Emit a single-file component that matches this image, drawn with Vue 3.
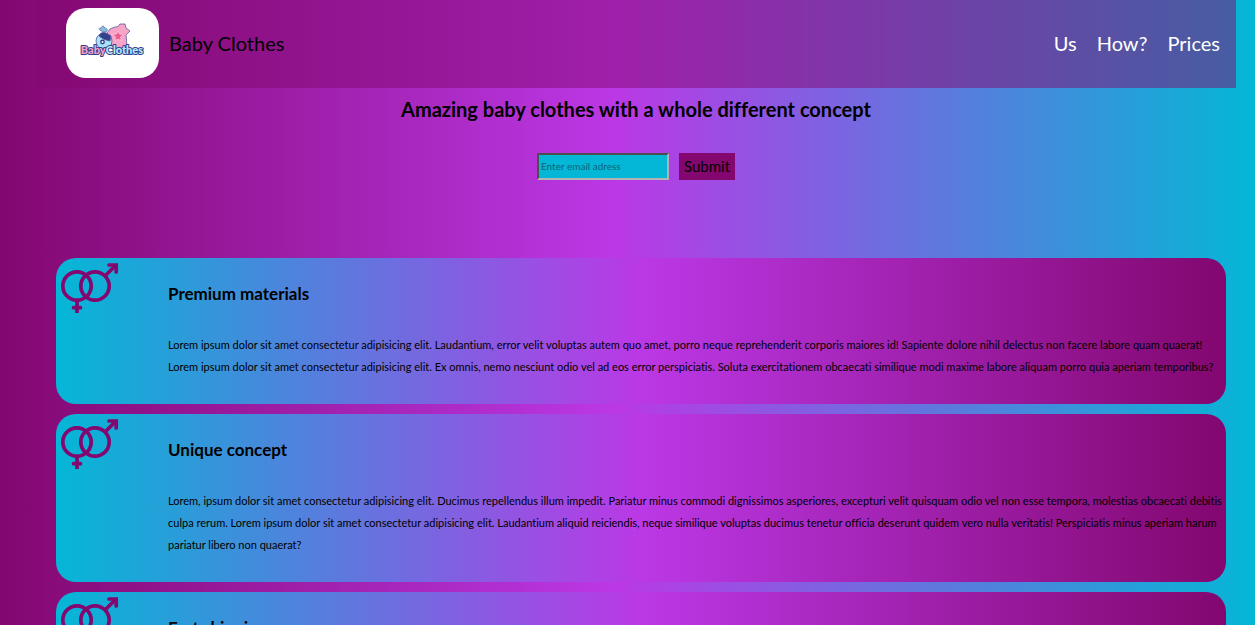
<script setup>
import { ref } from 'vue'

const email = ref('')

const links = [
  { label: 'Us', href: '#us' },
  { label: 'How?', href: '#how' },
  { label: 'Prices', href: '#prices' },
]

const features = [
  {
    title: 'Premium materials',
    text: 'Lorem ipsum dolor sit amet consectetur adipisicing elit. Laudantium, error velit voluptas autem quo amet, porro neque reprehenderit corporis maiores id! Sapiente dolore nihil delectus non facere labore quam quaerat! Lorem ipsum dolor sit amet consectetur adipisicing elit. Ex omnis, nemo nesciunt odio vel ad eos error perspiciatis. Soluta exercitationem obcaecati similique modi maxime labore aliquam porro quia aperiam temporibus?',
  },
  {
    title: 'Unique concept',
    text: 'Lorem, ipsum dolor sit amet consectetur adipisicing elit. Ducimus repellendus illum impedit. Pariatur minus commodi dignissimos asperiores, excepturi velit quisquam odio vel non esse tempora, molestias obcaecati debitis culpa rerum. Lorem ipsum dolor sit amet consectetur adipisicing elit. Laudantium aliquid reiciendis, neque similique voluptas ducimus tenetur officia deserunt quidem vero nulla veritatis! Perspiciatis minus aperiam harum pariatur libero non quaerat?',
  },
  {
    title: 'Fast shipping',
    text: 'Lorem ipsum dolor sit amet consectetur adipisicing elit.',
  },
]
</script>

<template>
  <div class="page">
    <header class="header">
      <div class="brand">
        <svg class="logo" viewBox="0 0 93 70" role="img" aria-label="Baby Clothes logo">
          <g stroke="#55599c" stroke-width="0.8">
            <path d="M44 21 L49 19 Q52 20 54 16 L59 16 L60 20 L64 23 L60 27 L61 38 Q54 43 46 41 L45 30 L41 25 Z" fill="#f8a3c8" />
            <circle cx="38" cy="33" r="8" fill="#a5e3f7" />
            <path d="M33 28 Q35 23 40 25 L45 28 L44 33 Q37 32 33 28 Z" fill="#33418d" />
            <path d="M35 23 Q31 20 35 20 Q37 16 39 20 Q43 21 40 24 Z" fill="#83bde0" stroke-width="0.6" />
          </g>
          <path d="M52 23 L53.5 26 L57 26.5 L54.5 29 L55 32.5 L52 31 L48.8 32.5 L49.5 29 L47 26.5 L50.5 26 Z" fill="#ee5d91" stroke="#ffd7e8" stroke-width="0.6" />
          <circle cx="36.5" cy="34" r="2.4" fill="#33418d" />
          <circle cx="36.5" cy="34" r="1" fill="#fff" />
          <text x="46" y="46" text-anchor="middle" class="logo-text"><tspan fill="#f7a1cb">Baby</tspan><tspan fill="#b8ecfb">Clothes</tspan></text>
        </svg>
        <span>Baby Clothes</span>
      </div>
      <nav class="nav">
        <a v-for="link in links" :key="link.href" :href="link.href">{{ link.label }}</a>
      </nav>
    </header>

    <main>
      <section class="intro">
        <h1>Amazing baby clothes with a whole different concept</h1>
        <form class="signup" @submit.prevent>
          <input v-model="email" type="email" aria-label="Email address" placeholder="Enter email adress" />
          <button type="submit">Submit</button>
        </form>
      </section>

      <section class="features">
        <article v-for="feature in features" :key="feature.title" class="card">
          <svg class="icon" viewBox="0 0 62 50" aria-hidden="true">
            <g fill="none" stroke="#83076f" stroke-width="3.7">
              <circle cx="16" cy="23" r="14.2" />
              <circle cx="34" cy="23" r="14.2" />
              <path d="M16 37 V50 M44 13 L55 2" />
              <path d="M12.5 44.7 H19.5 M48 2 H55.2 V9" stroke-linecap="round" />
            </g>
          </svg>
          <div class="copy">
            <h2>{{ feature.title }}</h2>
            <p>{{ feature.text }}</p>
          </div>
        </article>
      </section>
    </main>
  </div>
</template>

<style>
body {
  margin: 0;
}
</style>

<style scoped>
.page {
  box-sizing: border-box;
  min-height: 100vh;
  padding: 0 19px 10px 36px;
  background: linear-gradient(to right, #83076f, #bb38e6 49%, #04b7d6);
  color: #000;
  font-family: Lato, sans-serif;
  font-variant-ligatures: none;
}

.header {
  display: flex;
  align-items: center;
  justify-content: space-between;
  padding: 8px 16px 10px 30px;
  background: rgba(131, 7, 111, 0.5);
  font-size: 20px;
}

.brand {
  display: flex;
  align-items: center;
  gap: 10px;
}

.logo {
  width: 93px;
  height: 70px;
  border-radius: 20px;
  background: #fff;
}

.logo-text {
  font: 900 11px Lato, sans-serif;
  stroke: #33418d;
  stroke-width: 2px;
  stroke-linejoin: round;
  paint-order: stroke;
}

.nav {
  display: flex;
  gap: 20px;
}

.nav a {
  color: #fff;
  text-decoration: none;
}

.intro {
  display: flex;
  flex-direction: column;
  align-items: center;
  padding: 9px 0 78px;
}

h1 {
  margin: 0 0 32px;
  font-size: 20px;
  line-height: 24px;
}

.signup {
  display: flex;
  gap: 10px;
}

.signup input {
  box-sizing: border-box;
  width: 132px;
  height: 27px;
  padding: 0 2px 2px;
  border: 2px solid;
  border-color: #4d4d4d #b3b3b3 #b3b3b3 #4d4d4d;
  border-radius: 0;
  background: #04b7d6;
  font: 10px Lato, sans-serif;
}

.signup input::placeholder {
  color: #0b6479;
}

.signup button {
  height: 27px;
  padding: 0 5px 2px;
  border: 0;
  background: #83076f;
  color: #000;
  font: 15px Lato, sans-serif;
}

.features {
  display: grid;
  gap: 10px;
  padding: 0 10px 0 20px;
}

.card {
  display: grid;
  grid-template-columns: 107px 1fr;
  padding: 5px 2px 26px 5px;
  border-radius: 20px;
  background: linear-gradient(to right, #04b7d6, #bb38e6, #83076f);
}

.icon {
  width: 62px;
  height: 50px;
}

.copy {
  padding-top: 20px;
}

h2 {
  margin: 0 0 30px;
  font-size: 17px;
  line-height: 21px;
}

p {
  margin: 0;
  font-size: 11px;
  line-height: 22px;
}
</style>
